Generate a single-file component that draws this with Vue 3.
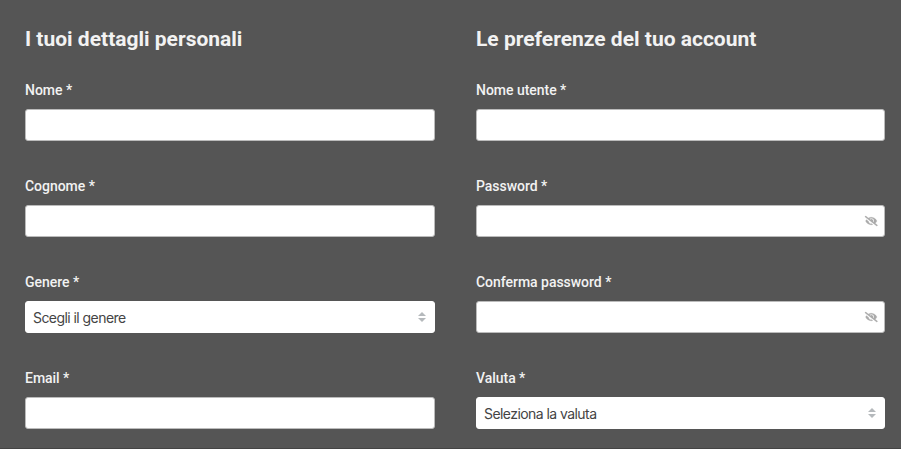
<script setup>
import { ref } from "vue";

// 左右兩欄的表單欄位
const columns = ref([
  {
    title: "I tuoi dettagli personali",
    fields: [
      { id: "nome", label: "Nome *", type: "text", value: "" },
      { id: "cognome", label: "Cognome *", type: "text", value: "" },
      {
        id: "genere",
        label: "Genere *",
        type: "select",
        placeholder: "Scegli il genere",
      },
      { id: "email", label: "Email *", type: "email", value: "" },
    ],
  },
  {
    title: "Le preferenze del tuo account",
    fields: [
      { id: "utente", label: "Nome utente *", type: "text", value: "" },
      { id: "password", label: "Password *", type: "password", value: "" },
      { id: "conferma", label: "Conferma password *", type: "password", value: "" },
      {
        id: "valuta",
        label: "Valuta *",
        type: "select",
        placeholder: "Seleziona la valuta",
      },
    ],
  },
]);

// 顯示或隱藏密碼
const visible = ref({});

function togglePassword(id) {
  visible.value[id] = !visible.value[id];
}

function inputType(field) {
  return visible.value[field.id] ? "text" : field.type;
}
</script>

<template>
  <form class="register" @submit.prevent>
    <section v-for="column in columns" :key="column.title" class="column">
      <h2>{{ column.title }}</h2>
      <div v-for="field in column.fields" :key="field.id" class="field">
        <label :for="field.id">{{ field.label }}</label>
        <div v-if="field.type === 'select'" class="selectBox">
          <select :id="field.id">
            <option>{{ field.placeholder }}</option>
          </select>
          <svg class="arrows" viewBox="0 0 4 5">
            <path d="M2 0L0 2h4zm0 5L0 3h4z" />
          </svg>
        </div>
        <div v-else class="inputBox">
          <input :id="field.id" v-model="field.value" :type="inputType(field)" />
          <svg
            v-if="field.type === 'password'"
            class="eye"
            viewBox="0 0 640 512"
            @click="togglePassword(field.id)"
          >
            <path
              d="M320 400c-75.85 0-137.25-58.71-142.9-133.11L72.2 185.82c-13.79 17.3-26.48 35.59-36.72 55.59a32.35 32.35 0 0 0 0 29.19C89.71 376.41 197.07 448 320 448c26.91 0 52.87-4 77.89-10.46L346 397.39a144.13 144.13 0 0 1-26 2.61zm313.82 58.1l-110.55-85.44a331.25 331.25 0 0 0 81.25-102.07 32.35 32.35 0 0 0 0-29.19C550.29 135.59 442.93 64 320 64a308.15 308.15 0 0 0-147.32 37.7L45.46 3.37A16 16 0 0 0 23 6.18L3.37 31.45A16 16 0 0 0 6.18 53.9l588.36 454.73a16 16 0 0 0 22.46-2.81l19.64-25.27a16 16 0 0 0-2.82-22.45zm-183.72-142l-39.3-30.38A94.75 94.75 0 0 0 416 256a94.76 94.76 0 0 0-121.31-92.21A47.65 47.65 0 0 1 304 192a46.64 46.64 0 0 1-1.54 10l-73.61-56.89A142.31 142.31 0 0 1 320 112a143.92 143.92 0 0 1 144 144c0 21.63-5.29 41.79-13.9 60.11z"
            />
          </svg>
        </div>
      </div>
    </section>
  </form>
</template>

<style>
body {
  background-color: #555;
}
</style>

<style scoped>
.register {
  box-sizing: border-box;
  display: grid;
  grid-template-columns: 410px 409px;
  column-gap: 41px;
  height: 449px;
  padding: 26px 16px 0 25px;
  overflow: hidden;
  background-color: #555;
  border-bottom: 1px solid #444;
  color: #f2f2f2;
  font-family: Roboto, "Liberation Sans", sans-serif;
}

h2 {
  margin: 0 0 28px;
  font-size: 21px;
  line-height: 26px;
  font-weight: 700;
}

.field {
  height: 96px;
}

label {
  display: block;
  margin-bottom: 9px;
  font-size: 14px;
  line-height: 20px;
  font-weight: 500;
  letter-spacing: -0.03px;
}

.inputBox,
.selectBox {
  box-sizing: border-box;
  display: flex;
  align-items: center;
  height: 32px;
  padding: 0 7px;
  background-color: #fff;
  border: 1px solid #bbb;
  border-radius: 3px;
}

.selectBox {
  padding-right: 8px;
  border-color: #fff;
}

input,
select {
  flex: 1;
  min-width: 0;
  height: 30px;
  padding: 0;
  border: 0;
  outline: 0;
  background: transparent;
  color: #444;
  font-family: inherit;
  font-size: 14px;
}

select {
  appearance: none;
  font-family: Inter, "Liberation Sans", sans-serif;
  letter-spacing: -0.56px;
}

.arrows {
  width: 8px;
  height: 10px;
  fill: #b5b9bc;
}

.eye {
  width: 12.5px;
  height: 10px;
  overflow: visible;
  fill: #aaa;
  stroke: #aaa;
  stroke-width: 14;
  cursor: pointer;
}
</style>
